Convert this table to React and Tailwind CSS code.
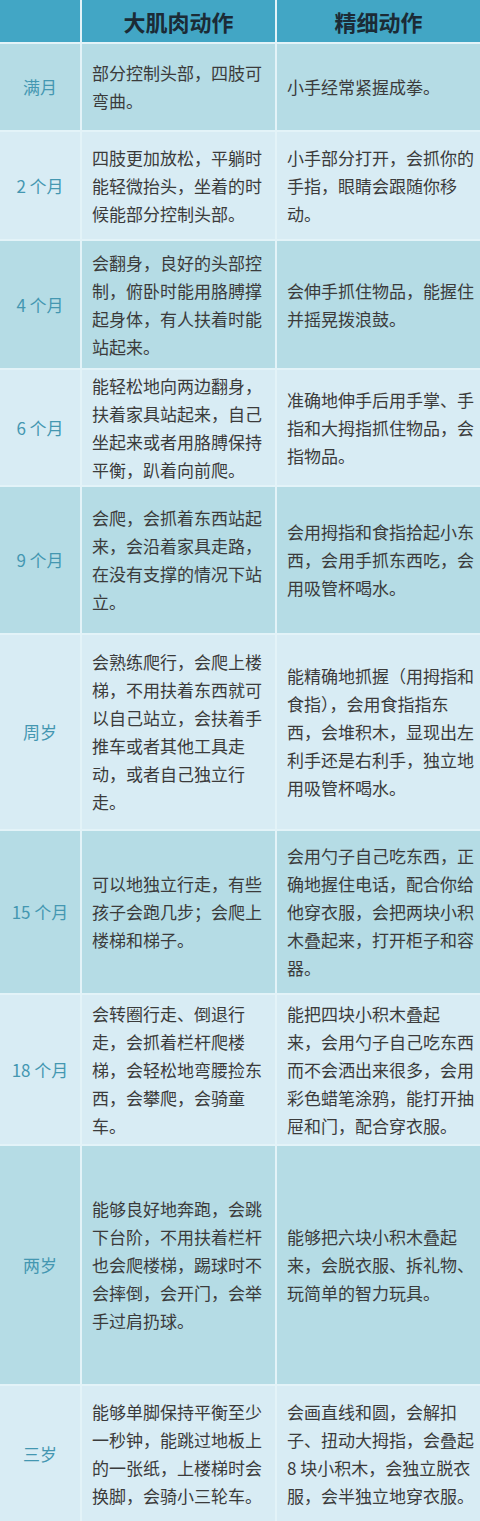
import React from 'react';

const rows = [
  { age: '满月', h: 'h-[86px]', dark: true,
    gross: ['部分控制头部，四肢可', '弯曲。'],
    fine: ['小手经常紧握成拳。'] },
  { age: '2 个月', h: 'h-[107px]', dark: false,
    gross: ['四肢更加放松，平躺时', '能轻微抬头，坐着的时', '候能部分控制头部。'],
    fine: ['小手部分打开，会抓你的', '手指，眼睛会跟随你移', '动。'] },
  { age: '4 个月', h: 'h-[127px]', dark: true,
    gross: ['会翻身，良好的头部控', '制，俯卧时能用胳膊撑', '起身体，有人扶着时能', '站起来。'],
    fine: ['会伸手抓住物品，能握住', '并摇晃拨浪鼓。'] },
  { age: '6 个月', h: 'h-[115px]', dark: false,
    gross: ['能轻松地向两边翻身，', '扶着家具站起来，自己', '坐起来或者用胳膊保持', '平衡，趴着向前爬。'],
    fine: ['准确地伸手后用手掌、手', '指和大拇指抓住物品，会', '指物品。'] },
  { age: '9 个月', h: 'h-[146px]', dark: true,
    gross: ['会爬，会抓着东西站起', '来，会沿着家具走路，', '在没有支撑的情况下站', '立。'],
    fine: ['会用拇指和食指拾起小东', '西，会用手抓东西吃，会', '用吸管杯喝水。'] },
  { age: '周岁', h: 'h-[194px]', dark: false,
    gross: ['会熟练爬行，会爬上楼', '梯，不用扶着东西就可', '以自己站立，会扶着手', '推车或者其他工具走', '动，或者自己独立行', '走。'],
    fine: ['能精确地抓握（用拇指和', '食指），会用食指指东', '西，会堆积木，显现出左', '利手还是右利手，独立地', '用吸管杯喝水。'] },
  { age: '15 个月', h: 'h-[162px]', dark: true,
    gross: ['可以地独立行走，有些', '孩子会跑几步；会爬上', '楼梯和梯子。'],
    fine: ['会用勺子自己吃东西，正', '确地握住电话，配合你给', '他穿衣服，会把两块小积', '木叠起来，打开柜子和容', '器。'] },
  { age: '18 个月', h: 'h-[149px]', dark: false,
    gross: ['会转圈行走、倒退行', '走，会抓着栏杆爬楼', '梯，会轻松地弯腰捡东', '西，会攀爬，会骑童', '车。'],
    fine: ['能把四块小积木叠起', '来，会用勺子自己吃东西', '而不会洒出来很多，会用', '彩色蜡笔涂鸦，能打开抽', '屉和门，配合穿衣服。'] },
  { age: '两岁', h: 'h-[238px]', dark: true,
    gross: ['能够良好地奔跑，会跳', '下台阶，不用扶着栏杆', '也会爬楼梯，踢球时不', '会摔倒，会开门，会举', '手过肩扔球。'],
    fine: ['能够把六块小积木叠起', '来，会脱衣服、拆礼物、', '玩简单的智力玩具。'] },
  { age: '三岁', h: 'h-[135px]', dark: false,
    gross: ['能够单脚保持平衡至少', '一秒钟，能跳过地板上', '的一张纸，上楼梯时会', '换脚，会骑小三轮车。'],
    fine: ['会画直线和圆，会解扣', '子、扭动大拇指，会叠起', '8 块小积木，会独立脱衣', '服，会半独立地穿衣服。'] },
];

function Lines({ lines }) {
  return (
    <div className="text-[17px] leading-[28px] text-[#3b3b3b] whitespace-nowrap">
      {lines.map((l, i) => <div key={i}>{l}</div>)}
    </div>
  );
}

export default function App() {
  return (
    <div className="w-[480px] h-[1521px] bg-[#e3f3f8] flex flex-col gap-[2px] overflow-hidden" style={{ fontFamily: '"Noto Sans CJK SC", "Noto Sans", sans-serif' }}>
      <div className="flex gap-[2px] h-[42px] shrink-0">
        <div className="w-[80px] bg-[#42a6c5]" />
        <div className="w-[193px] bg-[#42a6c5] flex items-center justify-center text-[22px] font-bold text-[#1b2b36]">大肌肉动作</div>
        <div className="flex-1 bg-[#42a6c5] flex items-center justify-center text-[22px] font-bold text-[#1b2b36]">精细动作</div>
      </div>
      {rows.map((r) => {
        const bg = r.dark ? 'bg-[#b5dce5]' : 'bg-[#d8ecf4]';
        return (
          <div key={r.age} className={`flex gap-[2px] shrink-0 ${r.h}`}>
            <div className={`w-[80px] flex items-center justify-center text-[17px] text-[#4497b1] ${bg}`}>{r.age}</div>
            <div className={`w-[193px] flex items-center pl-[10px] ${bg}`}><Lines lines={r.gross} /></div>
            <div className={`flex-1 flex items-center pl-[10px] ${bg}`}><Lines lines={r.fine} /></div>
          </div>
        );
      })}
    </div>
  );
}
